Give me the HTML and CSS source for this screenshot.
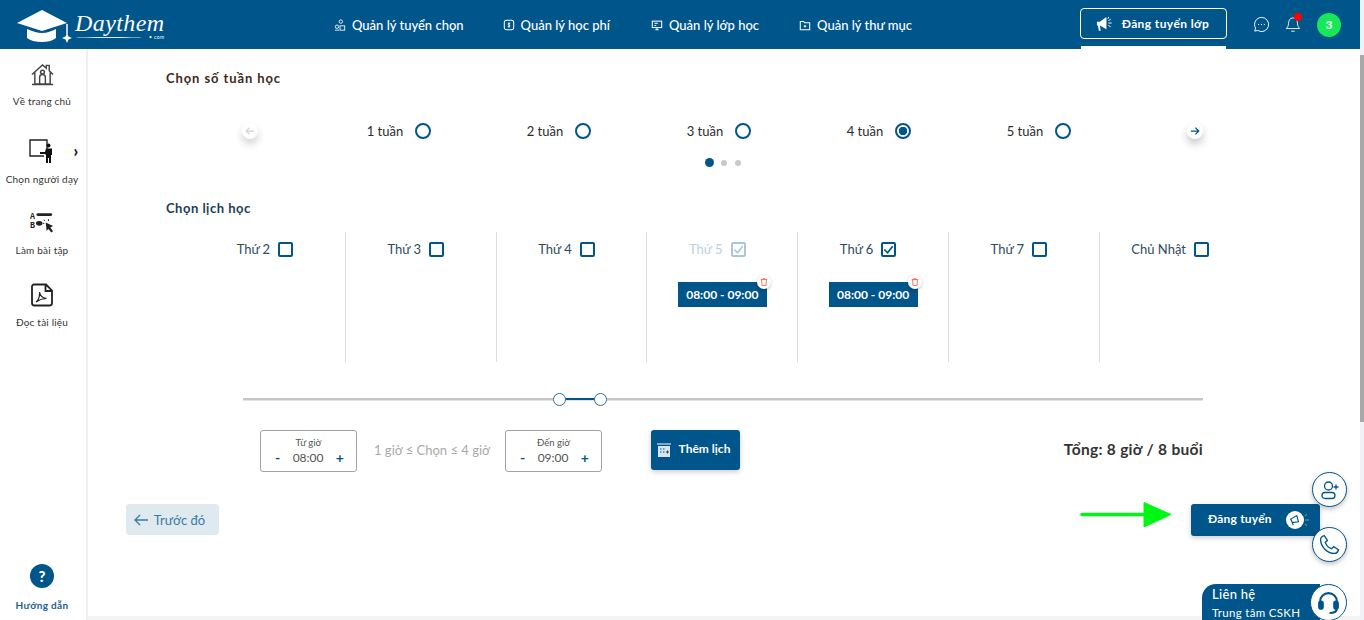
FILE: index.html
```html
<!DOCTYPE html>
<html lang="vi">
<head>
<meta charset="utf-8">
<title>Daythem</title>
<link rel="stylesheet" href="styles.css">
</head>
<body>
<div class="frame">
<div class="page">
  <header class="topbar">
    <a class="logo">
      <svg class="logo-cap" viewBox="0 0 56 34" width="56" height="34"><path d="M25 1 50 14 25 22 0 14Z" fill="#fff"/><path d="M10 20c5 2 10 4 15 4s10-2 14-4v9c-4 3-9 4-14 4s-11-1-15-4Z" fill="#fff"/><path d="M50 15v10" stroke="#fff" stroke-width="1.500"/><path d="M50 24l1.500 3.500 3.500 1.500-3.500 1.500-1.500 3.500-1.500-3.500-3.500-1.500 3.500-1.500Z" fill="#fff"/></svg>
      <span class="logo-word">Daythem<i class="logo-swoosh"></i><small>• com</small></span>
    </a>
    <nav class="nav">
      <a class="nav-link nav-1"><svg viewBox="0 0 14 14" width="12" height="12" fill="none" stroke="#fff"><circle cx="8" cy="3" r="2"/><circle cx="3.500" cy="9" r="2"/><rect x="7" y="8" width="5.500" height="5"/><path d="M1 13h5"/></svg>Quản lý tuyển chọn</a>
      <a class="nav-link nav-2"><svg viewBox="0 0 14 14" width="12" height="12" fill="none" stroke="#fff" stroke-width="1.200"><rect x="1.500" y="1.500" width="11" height="11" rx="2.500"/><path d="M8.500 5H6.200v2h1.600v2H5.500M7 4v6" stroke-width="1"/></svg>Quản lý học phí</a>
      <a class="nav-link nav-3"><svg viewBox="0 0 14 14" width="12" height="12" fill="none" stroke="#fff" stroke-width="1.200"><rect x="1.500" y="2.500" width="11" height="7.500"/><path d="M4 5h4M4 7.500h2M5 12.500h4M7 10v2"/></svg>Quản lý lớp học</a>
      <a class="nav-link nav-4"><svg viewBox="0 0 14 14" width="12" height="12" fill="none" stroke="#fff" stroke-width="1.200"><path d="M1.500 3h4l1 1.500h6v8h-11ZM7 7v3M5.500 8.500h3"/></svg>Quản lý thư mục</a>
    </nav>
    <div class="top-action">
      <a class="post-btn"><svg viewBox="0 0 20 16" width="19" height="16"><path d="M1 5.500h3l7-5v13L4 9.500l1 5.500H3L2 9.500H1Z" fill="#fff"/><path d="M13 4.500l2.500-1.500M13 7h3.500M13 9.500l2.500 1.500M12.500 2.500l1-2" stroke="#fff" fill="none"/></svg>Đăng tuyển lớp</a>
    </div>
    <svg class="top-icon msg" viewBox="0 0 18 18" width="17" height="17" fill="none" stroke="#fff" stroke-width="1"><path d="M9 1.500a7.500 7.500 0 1 1-4 13.800L1.800 16l.9-3.200A7.500 7.500 0 0 1 9 1.500Z"/><path d="M5.500 9h1M8.500 9h1M11.500 9h1" stroke-width="1.200"/></svg>
    <span class="bell"><svg viewBox="0 0 18 20" width="16" height="18" fill="none" stroke="#fff"><path d="M9 2c3.500 0 5 3 5 6 0 4 2 5 2.500 6h-15C2 13 4 12 4 8c0-3 1.500-6 5-6ZM7 17h4"/></svg><i class="bell-dot"></i></span>
    <span class="avatar">3</span>
  </header>

  <div class="workspace">
    <aside class="sidebar">
      <a class="side-item side-home"><svg viewBox="0 0 24 24" width="23" height="23" fill="none" stroke="#444" stroke-width="1.500"><path d="M1 12 12 2l4 3.500V2.500h3V8l4 4M4 10v12h16V10M1 22.500h22M9 22v-7a3 3 0 0 1 6 0v7"/><circle cx="12" cy="9.500" r="2"/></svg><span>Về trang chủ</span></a>
      <a class="side-item side-teacher"><svg viewBox="0 0 26 24" width="26" height="24" fill="none" stroke="#222" stroke-width="1.400"><path d="M15 17H1V1h17v11"/><circle cx="19.500" cy="6.500" r="2" fill="#111" stroke="none"/><path d="M11 13h5l1-3.500h6V16h-1v8h-2v-5h-1v5h-2v-8l-1-1h-5Z" fill="#111" stroke="none"/></svg><span>Chọn người dạy</span><b class="chev">›</b></a>
      <a class="side-item side-exam"><svg viewBox="0 0 26 24" width="24" height="23"><text x="0" y="9" class="ab">A</text><text x="0" y="19" class="ab">B</text><rect x="7" y="3" width="17" height="3" rx="1.500" fill="#222"/><ellipse cx="10" cy="14" rx="3.500" ry="2.500" fill="#222"/><path d="M17 13l8 4-3 1.500 3 4-2 1.500-3-4-2 2Z" fill="#222"/><path d="M15 10l1 1.500M20 9.500v2M14 14h1.500" stroke="#222"/></svg><span>Làm bài tập</span></a>
      <a class="side-item side-pdf"><svg viewBox="0 0 24 24" width="24" height="24" fill="none" stroke="#222" stroke-width="1.800"><path d="M4 1.500h12l6 6V20a2.500 2.500 0 0 1-2.500 2.500h-15A2.500 2.500 0 0 1 2 20V3.500a2 2 0 0 1 2-2ZM15.500 1.500v6.500H22"/><path d="M6 19c3-2 4-7 3.500-10 .5 4 3 6 7 6.500-4 0-7 1-10.500 3.500Z" stroke-width="1.200"/></svg><span>Đọc tài liệu</span></a>
      <a class="side-help"><span class="help-mark">?</span><span class="help-label">Hướng dẫn</span></a>
    </aside>

    <main class="content">
      <h2 class="section-title first">Chọn số tuần học</h2>
      <div class="carousel">
        <span class="arrow arrow-off"><svg viewBox="0 0 12 12" width="10" height="10" fill="none" stroke="#d4d4d4" stroke-width="1.500"><path d="M11 6H1.500M5.500 2 1.500 6l4 4"/></svg></span>
        <div class="weeks">
          <label class="week">1 tuần<i class="radio"></i></label>
          <label class="week">2 tuần<i class="radio"></i></label>
          <label class="week">3 tuần<i class="radio"></i></label>
          <label class="week">4 tuần<i class="radio on"></i></label>
          <label class="week">5 tuần<i class="radio"></i></label>
        </div>
        <span class="arrow"><svg viewBox="0 0 12 12" width="10" height="10" fill="none" stroke="#00558a" stroke-width="1.500"><path d="M1 6h9.500M6.500 2l4 4-4 4"/></svg></span>
      </div>
      <div class="dots"><i class="dot on"></i><i class="dot"></i><i class="dot"></i></div>

      <h2 class="section-title second">Chọn lịch học</h2>
      <div class="days">
        <div class="day"><div class="day-head">Thứ 2<i class="check"></i></div></div>
        <div class="day"><div class="day-head">Thứ 3<i class="check"></i></div></div>
        <div class="day"><div class="day-head">Thứ 4<i class="check"></i></div></div>
        <div class="day day-off"><div class="day-head">Thứ 5<i class="check"><svg viewBox="0 0 14 14" width="13" height="13" fill="none" stroke="currentColor" stroke-width="1.800"><path d="M2.500 7 6 10.500 11.500 3.500"/></svg></i></div><div class="chip">08:00 - 09:00<span class="trash"><svg viewBox="0 0 10 10" width="8" height="8" fill="none" stroke="#f4513b"><path d="M1 2h8M3.500 2V1h3v1M2 2l.5 7.500h5L8 2"/></svg></span></div></div>
        <div class="day"><div class="day-head">Thứ 6<i class="check"><svg viewBox="0 0 14 14" width="13" height="13" fill="none" stroke="currentColor" stroke-width="1.800"><path d="M2.500 7 6 10.500 11.500 3.500"/></svg></i></div><div class="chip">08:00 - 09:00<span class="trash"><svg viewBox="0 0 10 10" width="8" height="8" fill="none" stroke="#f4513b"><path d="M1 2h8M3.500 2V1h3v1M2 2l.5 7.500h5L8 2"/></svg></span></div></div>
        <div class="day"><div class="day-head">Thứ 7<i class="check"></i></div></div>
        <div class="day"><div class="day-head">Chủ Nhật<i class="check"></i></div></div>
      </div>

      <div class="slider"><i class="fill"></i><i class="thumb thumb-a"></i><i class="thumb thumb-b"></i></div>

      <div class="controls">
        <div class="stepper"><span class="step-label">Từ giờ</span><div class="step-row"><b class="minus">-</b><span>08:00</span><b class="plus">+</b></div></div>
        <span class="rule">1 giờ ≤ Chọn ≤ 4 giờ</span>
        <div class="stepper"><span class="step-label">Đến giờ</span><div class="step-row"><b class="minus">-</b><span>09:00</span><b class="plus">+</b></div></div>
        <a class="add-btn"><svg viewBox="0 0 16 16" width="16" height="16"><path d="M1 2h14" stroke="#fff"/><path d="M2 4h12v11H2Z" fill="#fff" opacity=".85"/><path d="M4 7h1.500M7 7h1.500M4 10h1.500M7 10h1.500M10 10h3M11.500 8.500v3" stroke="#00558a"/></svg><span class="add-label">Thêm lịch</span></a>
        <strong class="total">Tổng: 8 giờ / 8 buổi</strong>
      </div>

      <div class="footer-actions">
        <a class="prev-btn"><svg viewBox="0 0 14 12" width="14" height="12" fill="none" stroke="#3d7aa3" stroke-width="1.300"><path d="M14 6H1M6 1 1 6l5 5"/></svg>Trước đó</a>
        <svg class="green-arrow" viewBox="0 0 92 28" width="92" height="28"><path d="M2 13.500h64" stroke="#00f714" stroke-width="3.500" stroke-linecap="round"/><path d="M64 1.500 91 13.500 64 26Z" fill="#00f714" stroke="#00f714" stroke-linejoin="round"/></svg>
        <a class="submit-btn"><span class="submit-label">Đăng tuyển</span><span class="submit-icon"><svg viewBox="0 0 16 16" width="14" height="14"><path d="M3 7l7-4 2 7-7 1Z" fill="none" stroke="#00558a" stroke-width="1.300"/><path d="M5 11l1 3" stroke="#00558a" stroke-width="1.300"/></svg><svg class="submit-rays" viewBox="0 0 6 12" width="6" height="12" fill="none" stroke="#8fb6cf" stroke-width=".8"><path d="M1 2l2-1.500M1 6h4M1 10l2 1.500"/></svg></span></a>
      </div>
    </main>
    <div class="bottom-band"></div>
  </div>

  <a class="float-btn float-user"><svg viewBox="0 0 20 20" width="20" height="20" fill="none" stroke="#00558a" stroke-width="1.300"><circle cx="8.500" cy="6" r="4"/><rect x="2" y="12.500" width="13" height="6" rx="3"/><path d="M16 4.500v5M13.500 7h5"/></svg></a>
  <a class="float-btn float-phone"><svg viewBox="0 0 20 20" width="21" height="21" fill="none" stroke="#00558a" stroke-width="1.300"><path d="M5 1.500 8 6 6 8c1 3 3 5 6 6l2-2 4.500 3c-.5 2.500-2 3.500-4 3.500C8 18.500 1.500 12 1.500 5.500c0-2 1.500-3.500 3.500-4Z"/></svg></a>
  <a class="contact"><span class="contact-title">Liên hệ</span><span class="contact-sub">Trung tâm CSKH</span><span class="contact-icon"><svg viewBox="0 0 24 24" width="25" height="25" fill="none" stroke="#00558a" stroke-width="2"><path d="M4 14V11a8 8 0 0 1 16 0v3"/><rect x="3" y="11" width="3.500" height="7" rx="1.700" fill="#00558a"/><rect x="17.500" y="11" width="3.500" height="7" rx="1.700" fill="#00558a"/><path d="M20 18c0 3-3 4-7 4"/></svg></span></a>
</div>
<div class="scrollbar"><i class="scroll-thumb"></i></div>
</div>
</body>
</html>
```
FILE: styles.css
```css
* { box-sizing: border-box; }
html, body { margin: 0; height: 100%; overflow: hidden; }
body { font-family: "Lato", "Noto Sans", sans-serif; color: #222; background: #fff; }
a { color: inherit; text-decoration: none; }
i { display: block; }
svg { display: block; flex: none; }
.frame { display: flex; height: 620px; }
.page { position: relative; flex: 1; min-width: 0; display: flex; flex-direction: column; }
.scrollbar { width: 4px; background: #f1f1f6; padding-top: 55px; }
.scroll-thumb { height: 367px; background: #a8a8a8; }

.topbar { height: 49px; flex: none; background: #00558a; color: #fff; display: flex; align-items: center; padding-left: 17px; }
.logo { display: flex; align-items: center; width: 150px; margin-top: 2px; }
.logo-cap { margin-right: 2px; }
.logo-word { position: relative; font: italic 24px "Liberation Serif", serif; letter-spacing: .4px; margin-top: -5px; }
.logo-word small { position: absolute; right: 0; top: 24px; font: 5px "Lato", sans-serif; }
.logo-swoosh { position: absolute; left: 1px; right: 22px; top: 27px; height: 1px; background: #dfe9f0; border-radius: 50%; }
.nav { display: flex; align-items: center; margin-left: 167px; }
.nav-link { display: flex; align-items: center; gap: 6px; font-size: 13px; font-weight: 500; white-space: nowrap; }
.nav-2 { margin-left: 39px; }
.nav-3 { margin-left: 41px; }
.nav-4 { margin-left: 40px; }
.top-action { align-self: stretch; margin-left: 168px; width: 147px; padding-top: 8px; border-bottom: 3px solid transparent; position: relative; }
.top-action::after { content: ""; position: absolute; left: 1px; right: 1px; bottom: -3px; height: 3px; background: #fff; }
.post-btn { height: 31px; display: flex; align-items: center; justify-content: center; gap: 7px; border: 1.500px solid #fff; border-radius: 4px; font-size: 12px; font-weight: 700; letter-spacing: .4px; padding-right: 2px; }
.msg { margin-left: 26px; }
.bell { position: relative; margin-left: 15px; }
.bell-dot { position: absolute; right: -1px; top: -3px; width: 8px; height: 8px; border-radius: 50%; background: #f00; }
.avatar { margin-left: 16px; width: 24px; height: 24px; border-radius: 50%; background: #16e85a; display: flex; align-items: center; justify-content: center; font-size: 12px; font-weight: 700; }

.workspace { flex: 1; min-height: 0; display: flex; position: relative; }
.sidebar { width: 88px; flex: none; border-right: 2px solid #f0f0f0; display: flex; flex-direction: column; align-items: center; padding: 14px 2px 0 0; position: relative; }
.side-item { position: relative; display: flex; flex-direction: column; align-items: center; font-size: 10px; color: #333; letter-spacing: .2px; white-space: nowrap; }
.side-home span { margin-top: 9px; }
.side-teacher { margin-top: 32px; }
.side-teacher span { margin-top: 10px; }
.side-exam { margin-top: 25px; }
.side-exam span { margin-top: 11px; }
.side-pdf { margin-top: 27px; }
.side-pdf span { margin-top: 9px; }
.ab { font: 700 9px "Liberation Mono", monospace; fill: #222; }
.chev { position: absolute; right: 0; top: 0; transform: translate(0, 2px); font-size: 16px; line-height: 20px; font-weight: 900; color: #111; }
.side-help { margin-top: auto; margin-bottom: 9px; display: flex; flex-direction: column; align-items: center; gap: 11px; }
.help-mark { width: 24px; height: 24px; border-radius: 50%; background: #00558a; color: #fff; display: flex; align-items: center; justify-content: center; font-size: 15px; font-weight: 900; }
.help-label { font-size: 10px; font-weight: 700; color: #1b628f; letter-spacing: .3px; }

.content { flex: 1; min-width: 0; padding-left: 38px; position: relative; z-index: 1; }
.section-title { margin: 0; font-size: 13px; font-weight: 700; line-height: 18px; letter-spacing: .5px; padding-left: 40px; }
.section-title.first { margin-top: 20px; color: #3c2a1a; letter-spacing: .9px; }
.section-title.second { margin-top: 32px; color: #1c3e52; }
.carousel { margin: 35px 0 0 116px; width: 961px; height: 18px; display: flex; align-items: center; justify-content: space-between; }
.arrow { width: 16px; height: 16px; border-radius: 50%; background: #fff; display: flex; align-items: center; justify-content: center; box-shadow: 0 5px 8px rgba(0,0,0,.22); }
.arrow-off { box-shadow: 0 5px 8px rgba(0,0,0,.18); }
.weeks { display: flex; }
.week { width: 160px; display: flex; align-items: center; justify-content: center; gap: 12px; padding-right: 7px; font-size: 13px; color: #2b2b2b; }
.radio { width: 16px; height: 16px; border-radius: 50%; border: 2px solid #00558a; }
.radio.on { background: radial-gradient(circle, #00558a 0 4px, #fff 4.500px); }
.dots { display: flex; align-items: center; justify-content: center; gap: 6px; margin: 18px 0 0 116px; width: 961px; height: 9px; padding-left: 1px; }
.dot { width: 6px; height: 6px; border-radius: 50%; background: #c9c9c9; margin-left: 2px; }
.dot.on { width: 9px; height: 9px; background: #00558a; margin-left: 0; margin-right: -1.500px; }

.days { display: flex; margin: 15px 0 0 69px; height: 130px; width: 1056px; }
.day { width: 150.800px; border-right: 1px solid #dcdcdc; display: flex; flex-direction: column; align-items: center; padding-top: 9px; color: #2e4b60; }
.day:last-child { border-right: 0; }
.day-head { display: flex; align-items: center; gap: 8px; height: 16px; font-size: 13px; white-space: nowrap; margin-right: 10px; }
.check { width: 15px; height: 15px; border: 2px solid #00558a; border-radius: 2px; color: #00558a; display: flex; align-items: center; justify-content: center; }
.check svg { margin: -1px; }
.day-off { color: #bcd0de; }
.day-off .check { border-color: #aac7da; color: #aac7da; }
.chip { position: relative; margin-top: 25px; width: 89px; height: 25px; padding-bottom: 1px; background: #00558a; color: #fff; display: flex; align-items: center; justify-content: center; font-size: 12px; font-weight: 700; }
.trash { position: absolute; right: -4px; top: -7px; width: 14px; height: 14px; border-radius: 50%; background: #fff; box-shadow: 0 1px 3px rgba(0,0,0,.25); display: flex; align-items: center; justify-content: center; }

.slider { position: relative; height: 2px; background: #c6c6c6; margin: 36px 0 0 117px; width: 960px; box-shadow: 0 .5px 0 #c6c6c6; }
.fill { position: absolute; left: 317px; width: 40px; top: 0; height: 2px; background: #00558a; }
.thumb { position: absolute; top: -5.500px; width: 13px; height: 13px; border-radius: 50%; background: #fff; border: 1px solid #2f7199; }
.thumb-a { left: 310px; }
.thumb-b { left: 350.500px; }

.controls { display: flex; align-items: flex-start; margin: 30px 0 0 134px; width: 943px; height: 42px; }
.stepper { width: 97px; height: 42px; border: 1px solid #a3a3a3; border-radius: 3px; display: flex; flex-direction: column; align-items: center; padding-top: 5px; color: #555; }
.step-label { font-size: 9.500px; line-height: 13px; }
.step-row { width: 100%; display: flex; justify-content: space-between; align-items: center; padding: 0 12px 0 14px; font-size: 12px; line-height: 15px; margin-top: 1px; }
.step-row b { color: #00558a; font-size: 14px; }
.rule { margin: 12px 15px 0 17px; width: 116px; font-size: 13px; line-height: 17px; color: #a9a9a9; white-space: nowrap; }
.add-btn { margin-left: 49px; width: 89px; height: 40px; background: #00558a; color: #fff; border-radius: 3px; box-shadow: 0 2px 5px rgba(0,0,0,.2); display: flex; align-items: center; justify-content: center; gap: 7px; padding-right: 5px; font-size: 12px; font-weight: 700; }
.add-label { margin-top: -3px; }
.total { margin-left: auto; margin-top: 9px; font-size: 15.500px; line-height: 20px; letter-spacing: .3px; color: #333; white-space: nowrap; }

.footer-actions { display: flex; align-items: flex-start; margin-top: 32px; height: 32px; }
.prev-btn { width: 93px; height: 31px; background: #dfe9f0; border-radius: 4px; display: flex; align-items: center; justify-content: center; gap: 6px; padding-right: 6px; font-size: 13px; color: #3d7aa3; }
.green-arrow { margin-left: auto; margin-right: 19px; margin-top: -3px; }
.submit-btn { margin-right: 40px; width: 129px; height: 32px; background: #00558a; color: #fff; border-radius: 3px; box-shadow: 0 2px 5px rgba(0,0,0,.2); display: flex; align-items: center; justify-content: space-between; padding: 0 16px 0 17px; font-size: 12px; font-weight: 700; letter-spacing: .2px; }
.submit-label { margin-top: -3px; }
.submit-icon { position: relative; width: 18px; height: 18px; border-radius: 50%; background: #fff; display: flex; align-items: center; justify-content: center; }
.submit-rays { position: absolute; left: 18px; top: 3px; }
.bottom-band { position: absolute; left: 88px; right: 0; bottom: 0; height: 4px; background: #f4f4f4; }

.float-btn { position: absolute; z-index: 3; right: 13px; width: 35px; height: 35px; border-radius: 50%; background: #fff; border: 1px solid #00558a; box-shadow: 0 2px 5px rgba(0,0,0,.25); display: flex; align-items: center; justify-content: center; }
.float-user { top: 472px; }
.float-phone { top: 527px; }
.contact { position: absolute; z-index: 2; left: 1202px; top: 584px; width: 118px; height: 36px; background: #00558a; color: #fff; border-radius: 14px 0 0 0; padding: 2px 0 0 10px; display: flex; flex-direction: column; overflow: visible; }
.contact-title { font-size: 13px; line-height: 17px; font-weight: 500; letter-spacing: .3px; }
.contact-sub { font-size: 11.500px; line-height: 16px; margin-top: 2px; letter-spacing: .3px; }
.contact-icon { position: absolute; left: 108px; top: 0; width: 37px; height: 37px; border-radius: 50%; background: #fff; border: 1px solid #00558a; display: flex; align-items: center; justify-content: center; }
```
